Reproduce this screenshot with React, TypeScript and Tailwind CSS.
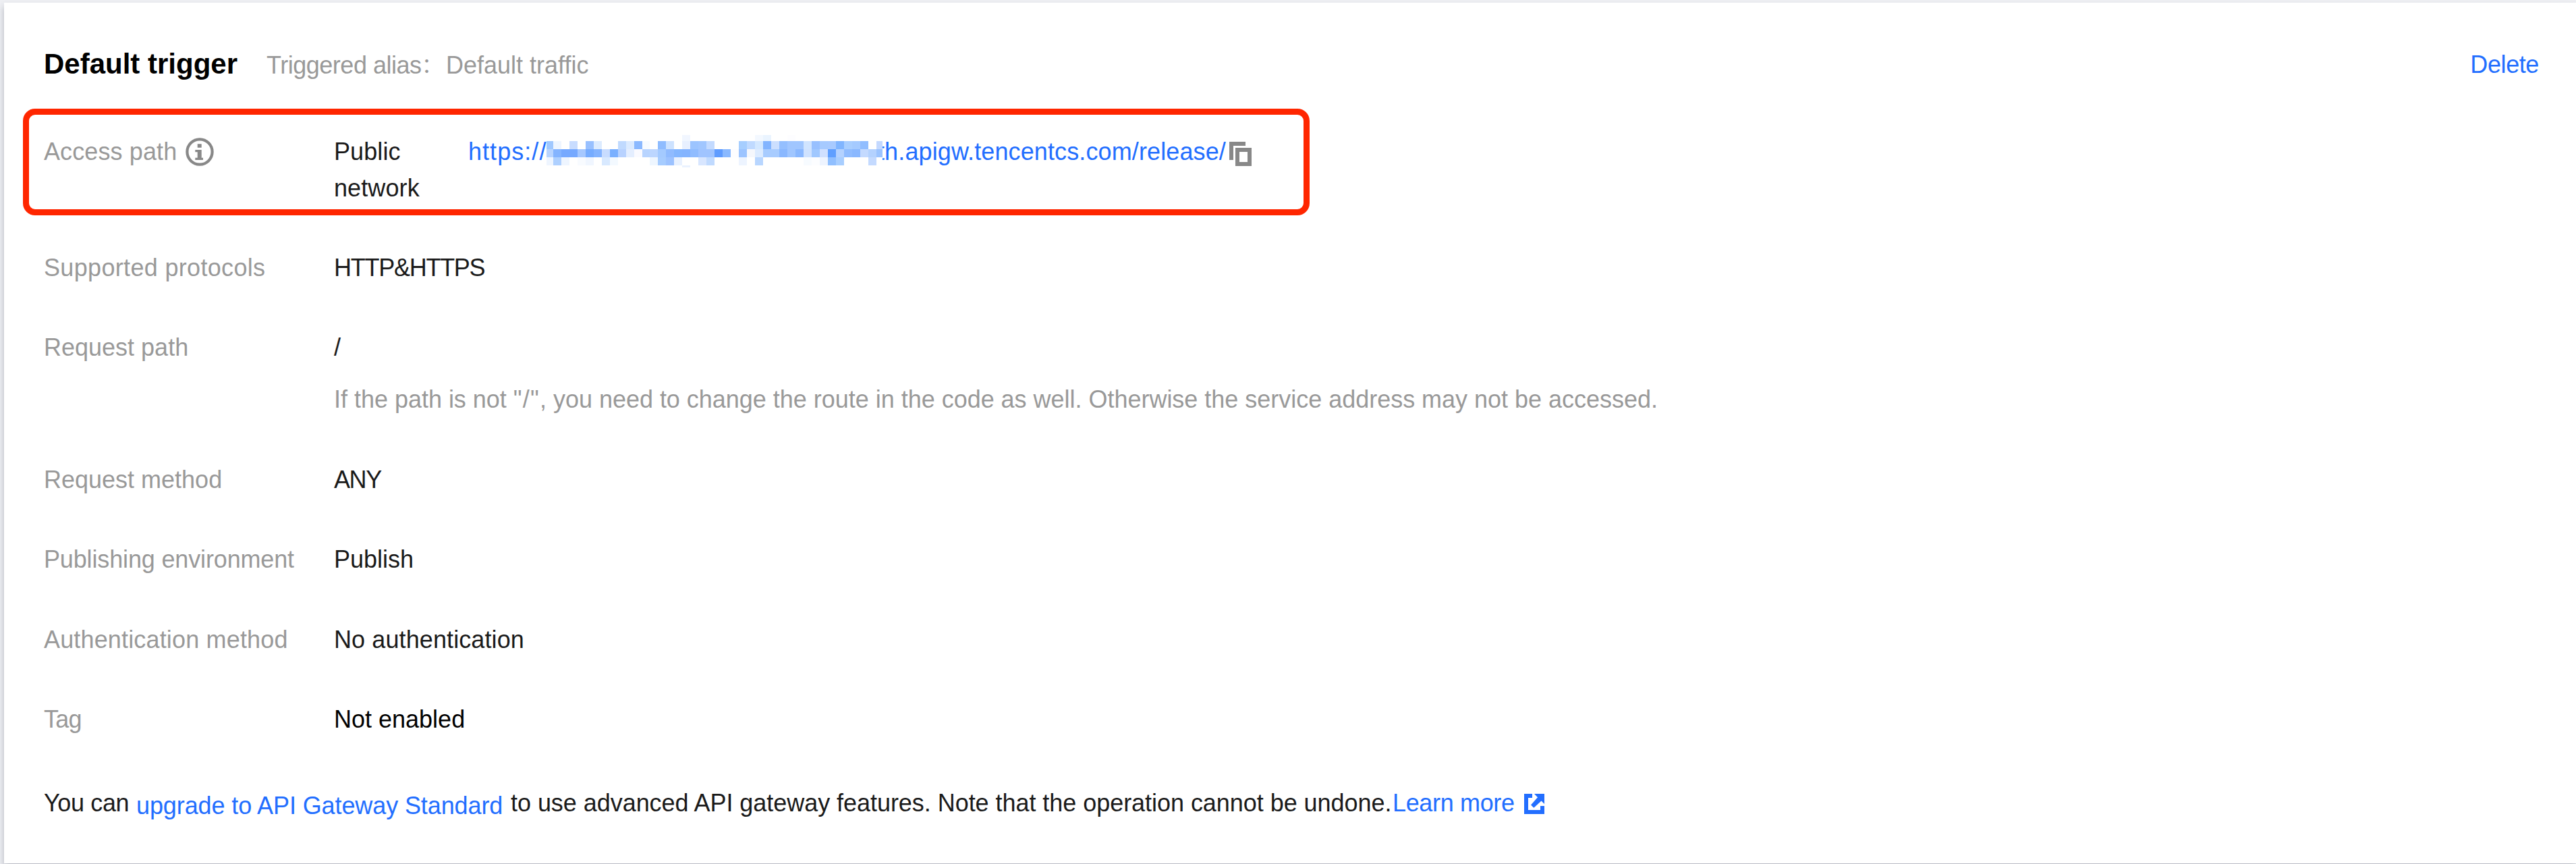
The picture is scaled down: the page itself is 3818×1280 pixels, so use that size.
import React from "react";

/* Colours of the masked part of the host name; each line is one row of blocks. */
const W = "";
const MASK_ROWS: { y: number; h: number; cells: Record<number, string> | string[] }[] = [
  { y: 0, h: 9, cells: { 17: "#f1f6ff", 26: "#f3f8ff", 27: "#eaf4ff", 30: "#fdfdff" } },
  {
    y: 9,
    h: 12,
    cells: [
      "#a0c8ff", "#eef5ff", W, "#c8dcff", W, "#98c0ff", "#dcebff", W, W, "#c0daff", "#dcebff", "#8bb9ff", "#f7fbff", W,
      "#8fbcff", "#cde2ff", W, "#e8f0ff", "#9cc4ff", "#a0c6ff", "#c3daff", W, W, W, "#a6ceff", "#c0daff", "#d4e8ff",
      "#82b4ff", "#ccdfff", "#94bfff", "#a0c6ff", "#a0c6ff", "#d0e4ff", "#98c0ff", "#a6caff", "#a8caff", "#80b5ff",
      "#a8ceff", "#a4caff", "#90bdff", W, "#c4d9ff",
    ],
  },
  {
    y: 21,
    h: 12,
    cells: [
      "#b8d4ff", "#84b4ff", "#76a9ff", "#76a9ff", "#a6c8ff", "#76acff", "#84b4ff", "#c8dcff", "#7ab0ff", "#b8d2ff",
      "#e4eeff", "#fafaff", "#b8d4ff", "#bcd6ff", "#a4caff", "#90bbff", "#84b6ff", "#84b4ff", "#90bcff", "#a0c4ff",
      "#a0c4ff", "#5f9cff", "#8ab9ff", "#fdfdff", "#9cc4ff", "#f5f7fc", "#dcebff", "#a8ccff", "#a8ccff", "#8ab8ff",
      "#a0c6ff", "#8ab8ff", "#cfe2ff", "#a0c8ff", "#d0e0ff", "#5f9fff", "#b4d2ff", "#90bcff", "#8ab8ff", "#c4daff",
      "#b4d2ff", "#9cc4ff",
    ],
  },
  {
    y: 33,
    h: 12,
    cells: {
      0: "#eef5ff", 1: "#aed0ff", 2: "#eef5ff", 4: "#f8fbff", 5: "#f0f6ff", 7: "#d8e9ff", 8: "#f3f9ff", 13: "#eef6ff",
      14: "#a6ccff", 15: "#9cc2ff", 16: "#e8f1ff", 19: "#d8e6ff", 20: "#c0daff", 24: "#edf4ff", 26: "#b8d6ff",
      32: "#f7fbff", 33: "#fcfdff", 34: "#eef4ff", 35: "#90bfff", 36: "#a8ceff", 40: "#c4daff",
    },
  },
  { y: 45, h: 3, cells: { 17: "#eaf2ff" } },
];

/* The first block is 10px wide, the last 9px, the one at index 12 is 11px, the others 12px. */
const cellX = (i: number) => (i === 0 ? 0 : i <= 12 ? 12 * i - 2 : 12 * i - 3);

function Mask() {
  return (
    <svg className="relative z-10 mt-[2px] -mr-[7px] h-12 w-[498px] shrink-0 bg-white" viewBox="0 0 498 48" shapeRendering="crispEdges" aria-hidden="true">
      {MASK_ROWS.map((row) =>
        Object.entries(row.cells).map(([k, fill]) => {
          const i = Number(k);
          const x = cellX(i);
          const next = Math.min(cellX(i + 1), 498);
          return fill ? <rect key={`${row.y}-${k}`} x={x} y={row.y} width={next - x} height={row.h} fill={fill} /> : null;
        }),
      )}
    </svg>
  );
}

function InfoIcon() {
  return (
    <svg className="h-[42px] w-[42px]" viewBox="0 0 42 42" fill="none" aria-hidden="true">
      <circle cx="21" cy="21" r="18.600" stroke="#888" strokeWidth="4.200" />
      <path d="M17.700 9.300h6v5.400h-6zM14.300 18h9.400v11.700H26V33H14.300v-3.300h3.400v-8.400h-3.400z" fill="#888" />
    </svg>
  );
}

function CopyIcon() {
  return (
    <svg className="h-9 w-[33px]" viewBox="0 0 33 36" fill="#888" aria-hidden="true">
      <path d="M0 0h24v6H6v21H0z" />
      <path fillRule="evenodd" d="M9 9h24v27H9zM15 15v15h12V15z" />
    </svg>
  );
}

function ExternalIcon() {
  return (
    <svg className="h-[30px] w-[30px]" viewBox="0 0 30 30" fill="#226eff" aria-hidden="true">
      <path d="M0 0h12v6H6v18h18v-6h6v12H0z" />
      <path d="M15 0h15v15l-4.500-4.500L14.300 20.800 10 16.500 20 5.300z" />
    </svg>
  );
}

function Row({ label, children, className = "" }: { label: React.ReactNode; children: React.ReactNode; className?: string }) {
  return (
    <div className={`relative flex items-start ${className}`}>
      <div className="w-[430px] shrink-0 text-[#999]">{label}</div>
      {children}
    </div>
  );
}

export default function App() {
  return (
    <div className="h-[1280px] w-full overflow-hidden bg-[#eeeff3] pt-1 pl-1.5 font-['Liberation_Sans','Noto_Sans_CJK_SC',sans-serif] text-[36px] leading-[54px] whitespace-nowrap text-[#1a1a1a]">
      <section className="h-[1275px] bg-white pt-[66px] pr-[54px] pl-[59px] shadow-[0_6px_9px_rgba(54,58,80,0.32)]">
        <header className="flex h-[54px] items-start">
          <h2 className="-mt-0.5 w-[330px] text-[42px] font-bold text-black">Default trigger</h2>
          <span className="w-[230px] tracking-[-0.477px] text-[#999]">Triggered alias</span>
          <span className="w-9 text-[30px] text-[#999]">：</span>
          <span className="text-[#999]">Default traffic</span>
          <a className="-mt-px mr-px ml-auto tracking-[-0.4px] text-[#226eff]">Delete</a>
        </header>

        <Row
          className="mt-[74px] h-[108px]"
          label={
            <span className="flex items-start">
              <span className="w-[210px] tracking-[0.110px]">Access path</span>
              <span className="mt-1.5">
                <InfoIcon />
              </span>
            </span>
          }
        >
          <div className="w-[199px] whitespace-normal">
            <span className="block w-[150px] tracking-[0.1px]">Public network</span>
          </div>
          <div className="flex items-start text-[#226eff]">
            <span className="w-[116px] tracking-[1.050px]">https://</span>
            <Mask />
            <span className="w-[521px] tracking-[0.118px]">th.apigw.tencentcs.com/release/</span>
            <span className="mt-3">
              <CopyIcon />
            </span>
          </div>
          <div className="pointer-events-none absolute -top-[37px] -left-[31px] h-[158px] w-[1907px] rounded-[18px] border-[9px] border-[#ff2600]" />
        </Row>

        <Row className="mt-16" label={<span className="tracking-[0.327px]">Supported protocols</span>}>
          <span className="tracking-[-1.266px]">HTTP&amp;HTTPS</span>
        </Row>
        <Row className="mt-16" label="Request path">
          <div>
            <p>/</p>
            <p className="mt-[23px] tracking-[-0.02px] text-[#999]">
              If the path is not <span className="tracking-[1.200px]">"/"</span>, you need to change the route in the code as well. Otherwise the service address may not be accessed.
            </p>
          </div>
        </Row>
        <Row className="mt-[65px]" label="Request method">
          <span className="tracking-[-1.4px]">ANY</span>
        </Row>
        <Row className="mt-16" label={<span className="tracking-[-0.149px]">Publishing environment</span>}>
          <span>Publish</span>
        </Row>
        <Row className="mt-[65px]" label={<span className="tracking-[0.159px]">Authentication method</span>}>
          <span className="tracking-[0.1px]">No authentication</span>
        </Row>
        <Row className="mt-16" label={<span className="tracking-[-0.7px]">Tag</span>}>
          <span className="text-black">Not enabled</span>
        </Row>

        <div className="mt-[70px] flex items-start">
          <span className="w-[137px] tracking-[-0.362px]">You can</span>
          <a className="mt-1 w-[555px] tracking-[-0.1px] text-[#226eff]">upgrade to API Gateway Standard</a>
          <span className="w-[1307px] tracking-[-0.045px]">
            to use advanced API gateway features. Note that the operation cannot be undone.
          </span>
          <a className="w-[195px] tracking-[-0.342px] text-[#226eff]">Learn more</a>
          <span className="mt-[13px]">
            <ExternalIcon />
          </span>
        </div>
      </section>
    </div>
  );
}
